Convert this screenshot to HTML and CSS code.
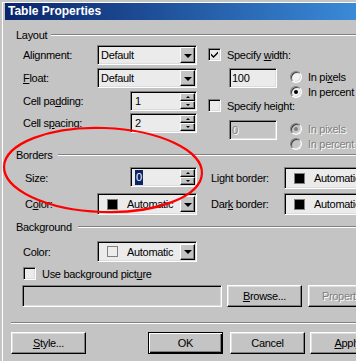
FILE: index.html
```html
<!DOCTYPE html>
<html lang="en">
<head>
  <meta charset="UTF-8">
  <title>Table Properties</title>
  <link rel="stylesheet" href="styles.css">
</head>
<body>

  <div class="window">
    <div class="titlebar">Table Properties</div>

    <div class="content">

      <div class="legend"><span>Layout</span></div>
      <div class="layout">
        <div class="left-col">
          <div class="row">
            <span class="label">Alignment:</span>
            <div class="field select"><span class="value">Default</span><span class="drop"><i class="arrow"></i></span></div>
          </div>
          <div class="row">
            <span class="label"><u>F</u>loat:</span>
            <div class="field select"><span class="value">Default</span><span class="drop"><i class="arrow"></i></span></div>
          </div>
          <div class="row row-pad">
            <span class="label">Cell pa<u>d</u>ding:</span>
            <div class="field spin"><span class="value">1</span><span class="spin-btns"><span class="spin-btn"><i class="tri-up"></i></span><span class="spin-btn"><i class="tri-down"></i></span></span></div>
          </div>
          <div class="row">
            <span class="label">Cell s<u>p</u>acing:</span>
            <div class="field spin"><span class="value">2</span><span class="spin-btns"><span class="spin-btn"><i class="tri-up"></i></span><span class="spin-btn"><i class="tri-down"></i></span></span></div>
          </div>
        </div>

        <div class="right-col">
          <div class="check-row">
            <span class="checkbox">
              <svg width="11" height="11" viewBox="0 0 11 11"><path d="M2 4.5 L4.5 7 L9 2.5 L9 4.5 L4.5 9 L2 6.5 Z" fill="#000"/></svg>
            </span>
            <span>Specify <u>w</u>idth:</span>
          </div>
          <div class="size-block">
            <div class="field text-field"><span class="value">100</span></div>
            <div class="radios">
              <div class="radio-row"><span class="radio"></span><span>In pi<u>x</u>els</span></div>
              <div class="radio-row"><span class="radio on"></span><span>In percent</span></div>
            </div>
          </div>
          <div class="check-row">
            <span class="checkbox"></span>
            <span>Specify height:</span>
          </div>
          <div class="size-block disabled">
            <div class="field text-field"><span class="value">0</span></div>
            <div class="radios">
              <div class="radio-row"><span class="radio on"></span><span>In pixels</span></div>
              <div class="radio-row"><span class="radio"></span><span>In percent</span></div>
            </div>
          </div>
        </div>
      </div>

      <div class="legend legend-wide"><span>Borders</span></div>
      <div class="borders">
        <span class="label">Size:</span>
        <div class="field spin spin-top"><span class="value"><span class="sel">0</span></span><span class="spin-btns"><span class="spin-btn"><i class="tri-up"></i></span><span class="spin-btn"><i class="tri-down"></i></span></span></div>
        <span class="label label-right">Light border:</span>
        <div class="field select color-select"><span class="swatch"></span><span class="value">Automatic</span><span class="drop"><i class="arrow"></i></span></div>

        <span class="label">C<u>o</u>lor:</span>
        <div class="field select color-select"><span class="swatch"></span><span class="value">Automatic</span><span class="drop"><i class="arrow"></i></span></div>
        <span class="label label-right">Dar<u>k</u> border:</span>
        <div class="field select color-select"><span class="swatch"></span><span class="value">Automatic</span><span class="drop"><i class="arrow"></i></span></div>
      </div>

      <div class="legend legend-wide legend-bg"><span>Background</span></div>
      <div class="bg-row">
        <span class="label">Color:</span>
        <div class="field select color-select short"><span class="swatch light"></span><span class="value">Automatic</span><span class="drop"><i class="arrow"></i></span></div>
      </div>
      <div class="check-row pic-row">
        <span class="checkbox"></span>
        <span>Use background pict<u>u</u>re</span>
      </div>
      <div class="file-row">
        <div class="field file-field"></div>
        <span class="button browse"><u>B</u>rowse...</span>
        <span class="button props disabled-text">Propert<u>i</u>es</span>
      </div>

      <div class="separator"></div>

      <div class="buttons">
        <span class="button"><u>S</u>tyle...</span>
        <span class="button default ok">OK</span>
        <span class="button cancel">Cancel</span>
        <span class="button apply"><u>A</u>pply</span>
      </div>

    </div>
  </div>

  <svg class="annotation" width="356" height="361" viewBox="0 0 356 361">
    <ellipse cx="103" cy="170" rx="99" ry="42" transform="rotate(2 103 170)" fill="none" stroke="#f00" stroke-width="2.2"/>
  </svg>

</body>
</html>
```

FILE: styles.css
```css
* {
  box-sizing: border-box;
}

html, body {
  margin: 0;
}

body {
  background: #c4c4c4;
  width: 356px;
  height: 361px;
  overflow: hidden;
  position: relative;
  font-family: "Liberation Sans", Arial, sans-serif;
  font-size: 11px;
  letter-spacing: -0.3px;
  color: #000;
}

.window {
  margin: 2px 0 0 2px;
  width: 420px;
  height: 359px;
  border-left: 1px solid #fff;
  border-top: 1px solid #fff;
  padding-left: 2px;
}

.titlebar {
  height: 17px;
  line-height: 17px;
  padding-left: 3px;
  color: #fff;
  font-weight: bold;
  font-size: 12px;
  letter-spacing: 0;
  background: linear-gradient(to right, #0a246a 0, #3a8ad8 351px, #a6caf0 417px);
}

.content {
  padding: 9px 0 0 11px;
}

/* group headings with etched line */
.legend {
  display: flex;
  align-items: center;
  height: 12px;
  line-height: 12px;
}

.legend::after {
  content: "";
  flex: 1;
  margin-left: 4px;
  border-top: 1px solid #808080;
  border-bottom: 1px solid #fff;
}

.legend-wide::after {
  margin-left: 6px;
}

.layout {
  display: flex;
  height: 104px;
  margin-top: 4px;
  padding-left: 7px;
}

.left-col {
  width: 174px;
}

.row {
  display: flex;
  align-items: center;
  height: 20px;
  margin-bottom: 3px;
}

.row-pad {
  margin-top: 3px;
  margin-bottom: 2px;
}

.label {
  width: 74px;
  white-space: nowrap;
}

/* sunken fields */
.field {
  display: flex;
  align-items: center;
  height: 20px;
  padding: 1px;
  background: #ebebeb;
  border: 1px solid;
  border-color: #808080 #fff #fff #808080;
  box-shadow: inset 1px 1px #000, inset -1px -1px #dcdcdc;
}

.field .value {
  flex: 1;
  padding-left: 2px;
  white-space: nowrap;
}

.select {
  width: 100px;
}

.drop {
  width: 15px;
  height: 16px;
  margin: 0 0 0 auto;
  display: flex;
  align-items: center;
  justify-content: center;
  background: #c4c4c4;
  border: 1px solid;
  border-color: #fff #000 #000 #fff;
  box-shadow: inset -1px -1px #808080;
}

.arrow {
  width: 0;
  height: 0;
  border-left: 4px solid transparent;
  border-right: 4px solid transparent;
  border-top: 4px solid #000;
  margin-top: 1px;
}

.spin {
  width: 67px;
  margin-left: 33px;
}

.spin .value {
  padding-left: 3px;
}

.spin-btns {
  display: flex;
  flex-direction: column;
  gap: 0;
}

.spin-btn {
  width: 15px;
  height: 8px;
  display: flex;
  align-items: center;
  justify-content: center;
  background: #c4c4c4;
  border: 1px solid;
  border-color: #fff #000 #000 #fff;
  box-shadow: inset -1px -1px #808080;
}

.tri-up, .tri-down {
  width: 0;
  height: 0;
  border-left: 2px solid transparent;
  border-right: 2px solid transparent;
}

.tri-up {
  border-bottom: 2px solid #000;
}

.tri-down {
  border-top: 2px solid #000;
}

.right-col {
  margin-left: 11px;
  padding-top: 3px;
}

.check-row {
  display: flex;
  align-items: center;
  height: 13px;
  gap: 6px;
  white-space: nowrap;
}

.checkbox {
  width: 13px;
  height: 13px;
  display: flex;
  align-items: center;
  justify-content: center;
  background: #ebebeb;
  border: 1px solid;
  border-color: #808080 #fff #fff #808080;
  box-shadow: inset 1px 1px #000, inset -1px -1px #dcdcdc;
}

.size-block {
  display: flex;
  margin: 7px 0 0 21px;
}

.size-block.disabled {
  margin-top: 8px;
}

.text-field {
  width: 48px;
}

.text-field .value {
  padding-left: 1px;
}

.radios {
  margin-left: 13px;
  padding-top: 1px;
}

.radio-row {
  display: flex;
  align-items: center;
  gap: 6px;
  height: 15px;
  white-space: nowrap;
}

.radio {
  width: 12px;
  height: 12px;
  border-radius: 50%;
  background: #f2f2f2;
  border: 1px solid;
  border-color: #808080 #fff #fff #808080;
  box-shadow: inset 1px 1px #404040, inset -1px -1px #dcdcdc;
  position: relative;
}

.radio.on::after {
  content: "";
  position: absolute;
  left: 3px;
  top: 3px;
  width: 4px;
  height: 4px;
  border-radius: 50%;
  background: #000;
}

.disabled .field {
  background: #c4c4c4;
}

.disabled .value,
.disabled .radio-row span:last-child,
.disabled-text {
  color: #808080;
  text-shadow: 1px 1px #fff;
}

.disabled .radio {
  background: #c4c4c4;
}

.disabled .radio.on::after {
  background: #808080;
}

.borders {
  display: grid;
  grid-template-columns: 72px 100px 87px 100px;
  row-gap: 4px;
  align-items: center;
  margin-top: 6px;
  padding-left: 9px;
}

.label-right {
  width: auto;
  padding-left: 14px;
}

.spin-top {
  align-self: start;
}

.sel {
  display: inline-block;
  background: #0a246a;
  color: #fff;
  padding: 0 1px;
  line-height: 15px;
}

.color-select {
  height: 22px;
}

.color-select .value {
  flex: 1;
  padding-left: 9px;
}

.swatch {
  width: 11px;
  height: 11px;
  margin-left: 8px;
  background: #000;
  border: 1px solid #808080;
}

.swatch.light {
  background: #ececec;
}

.legend-bg {
  margin-top: 6px;
}

.bg-row {
  display: flex;
  align-items: center;
  margin-top: 8px;
  padding-left: 7px;
}

.short {
  height: 21px;
}

.pic-row {
  margin-top: 5px;
  padding-left: 7px;
}

.file-row {
  display: flex;
  margin-top: 5px;
  padding-left: 6px;
}

.file-field {
  width: 200px;
  height: 22px;
  background: #c4c4c4;
}

/* raised buttons */
.button {
  width: 75px;
  height: 22px;
  flex: none;
  display: flex;
  align-items: center;
  justify-content: center;
  background: #c4c4c4;
  border: 1px solid;
  border-color: #fff #000 #000 #fff;
  box-shadow: inset -1px -1px #808080, inset 1px 1px #dfdfdf;
}

.browse {
  margin-left: 5px;
}

.props {
  margin-left: 6px;
}

.separator {
  margin: 15px 0 0 -5px;
  border-top: 1px solid #808080;
  border-bottom: 1px solid #fff;
}

.buttons {
  display: flex;
  margin: 8px 0 0 -5px;
}

.button.default {
  border: 1px solid #000;
  box-shadow: inset 1px 1px #fff, inset -1px -1px #000, inset -2px -2px #808080;
}

.ok {
  margin-left: 62px;
}

.cancel {
  margin-left: 7px;
}

.apply {
  margin-left: 5px;
}

.annotation {
  position: absolute;
  left: 0;
  top: 0;
  pointer-events: none;
}
```
